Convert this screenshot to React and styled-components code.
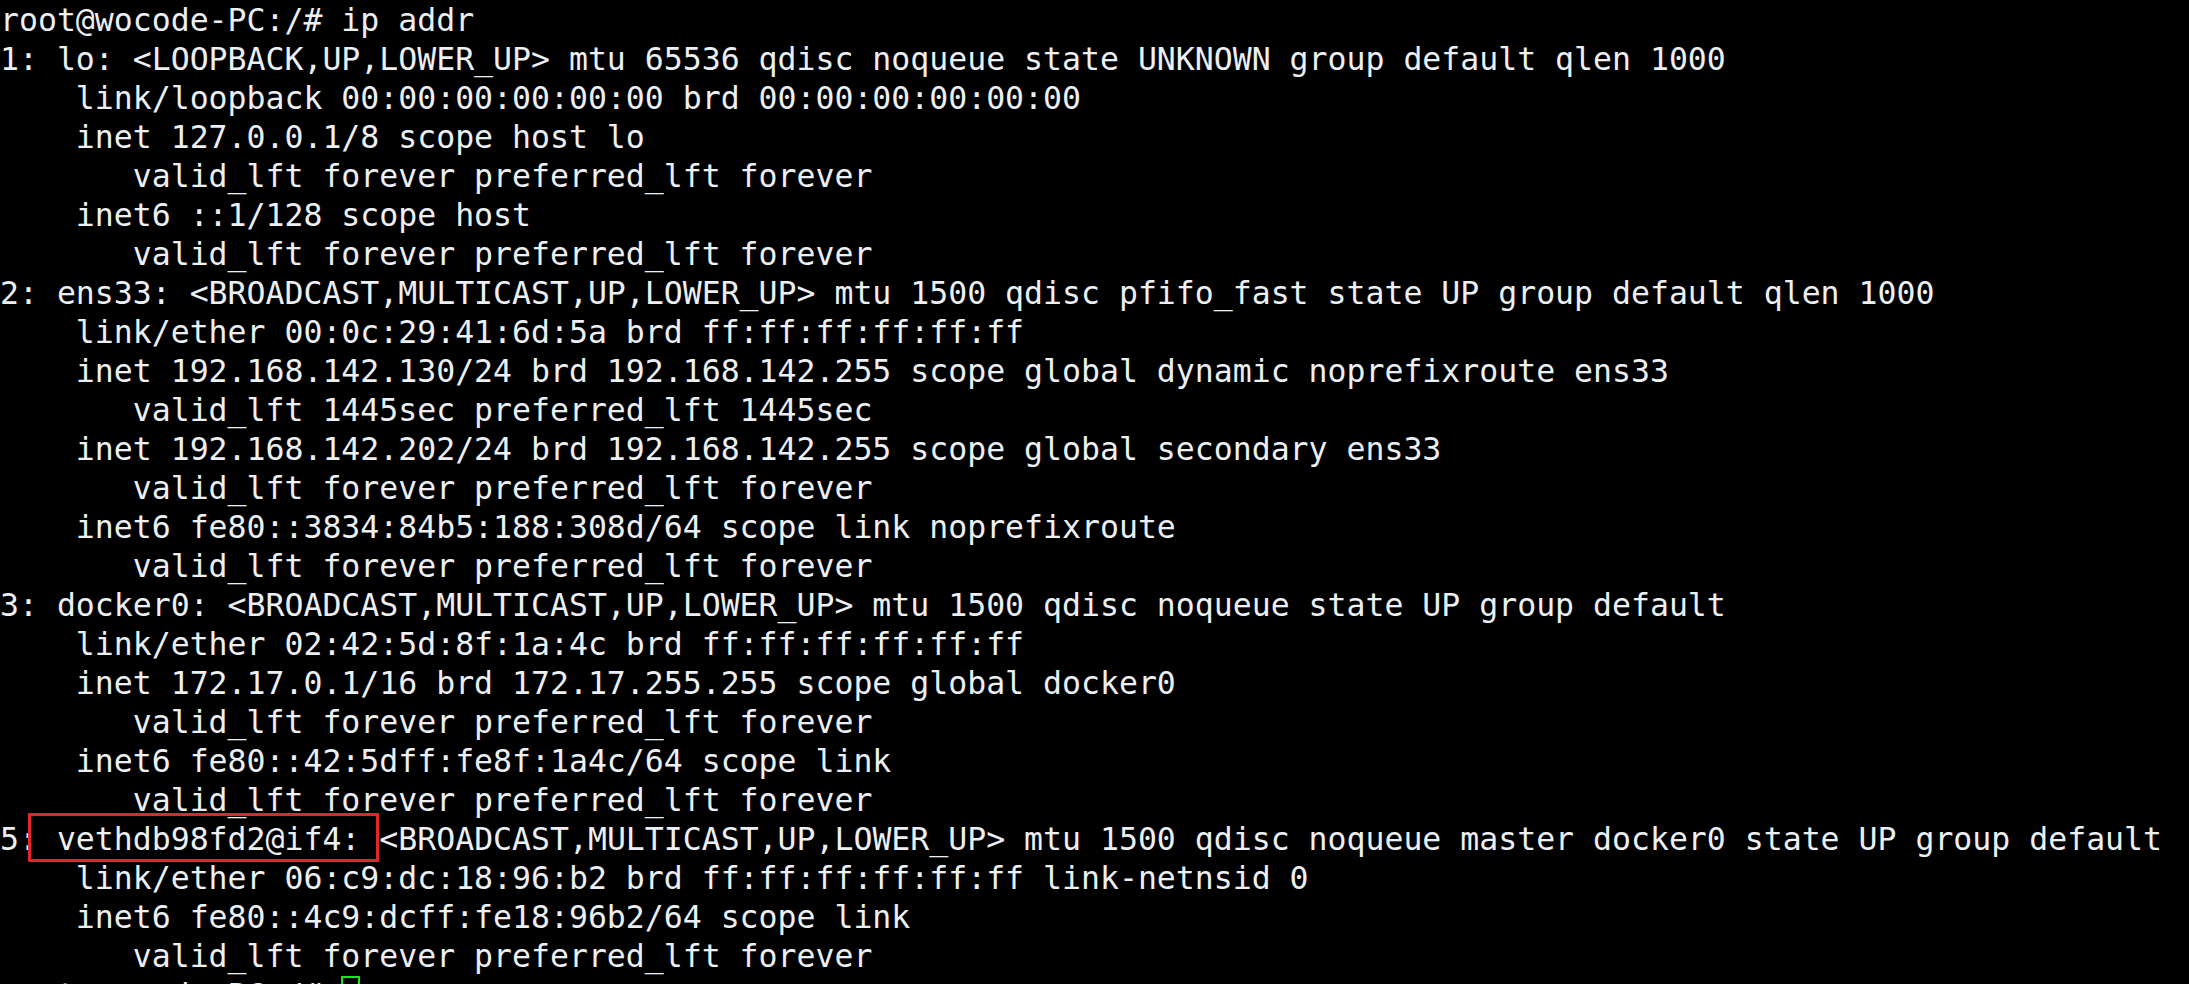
import { createGlobalStyle, styled } from 'styled-components';

const GlobalStyle = createGlobalStyle`
  html, body {
    margin: 0;
    padding: 0;
    background: #000;
    overflow: hidden;
  }
`;

const Terminal = styled.div`
  background: #000;
  color: #eceff3;
  font-family: "DejaVu Sans Mono", "Liberation Mono", monospace;
  font-size: 31.5px;
  line-height: 39px;
  padding-top: 1px;
  min-height: 984px;
  box-sizing: border-box;
`;

const Line = styled.div`
  white-space: pre;
  height: 39px;
`;

const Highlight = styled.span`
  position: relative;

  &::after {
    content: "";
    position: absolute;
    left: -10px;
    right: 0;
    top: -8px;
    bottom: -5px;
    border: 3px solid #e3262b;
    border-radius: 1px;
    pointer-events: none;
  }
`;

const Cursor = styled.span`
  display: inline-block;
  width: 1ch;
  height: 36px;
  vertical-align: top;
  border: 2px solid #1fe21f;
  box-sizing: border-box;
`;

const lines = [
  'root@wocode-PC:/# ip addr',
  '1: lo: <LOOPBACK,UP,LOWER_UP> mtu 65536 qdisc noqueue state UNKNOWN group default qlen 1000',
  '    link/loopback 00:00:00:00:00:00 brd 00:00:00:00:00:00',
  '    inet 127.0.0.1/8 scope host lo',
  '       valid_lft forever preferred_lft forever',
  '    inet6 ::1/128 scope host',
  '       valid_lft forever preferred_lft forever',
  '2: ens33: <BROADCAST,MULTICAST,UP,LOWER_UP> mtu 1500 qdisc pfifo_fast state UP group default qlen 1000',
  '    link/ether 00:0c:29:41:6d:5a brd ff:ff:ff:ff:ff:ff',
  '    inet 192.168.142.130/24 brd 192.168.142.255 scope global dynamic noprefixroute ens33',
  '       valid_lft 1445sec preferred_lft 1445sec',
  '    inet 192.168.142.202/24 brd 192.168.142.255 scope global secondary ens33',
  '       valid_lft forever preferred_lft forever',
  '    inet6 fe80::3834:84b5:188:308d/64 scope link noprefixroute',
  '       valid_lft forever preferred_lft forever',
  '3: docker0: <BROADCAST,MULTICAST,UP,LOWER_UP> mtu 1500 qdisc noqueue state UP group default',
  '    link/ether 02:42:5d:8f:1a:4c brd ff:ff:ff:ff:ff:ff',
  '    inet 172.17.0.1/16 brd 172.17.255.255 scope global docker0',
  '       valid_lft forever preferred_lft forever',
  '    inet6 fe80::42:5dff:fe8f:1a4c/64 scope link',
  '       valid_lft forever preferred_lft forever',
];

const tail = [
  '    link/ether 06:c9:dc:18:96:b2 brd ff:ff:ff:ff:ff:ff link-netnsid 0',
  '    inet6 fe80::4c9:dcff:fe18:96b2/64 scope link',
  '       valid_lft forever preferred_lft forever',
];

function App() {
  return (
    <>
      <GlobalStyle />
      <Terminal>
        {lines.map((text, i) => (
          <Line key={i}>{text}</Line>
        ))}
        <Line>
          5:<Highlight> vethdb98fd2@if4: </Highlight>
          {'<BROADCAST,MULTICAST,UP,LOWER_UP> mtu 1500 qdisc noqueue master docker0 state UP group default'}
        </Line>
        {tail.map((text, i) => (
          <Line key={'t' + i}>{text}</Line>
        ))}
        <Line>
          {'root@wocode-PC:/# '}
          <Cursor />
        </Line>
      </Terminal>
    </>
  );
}

export default App;
